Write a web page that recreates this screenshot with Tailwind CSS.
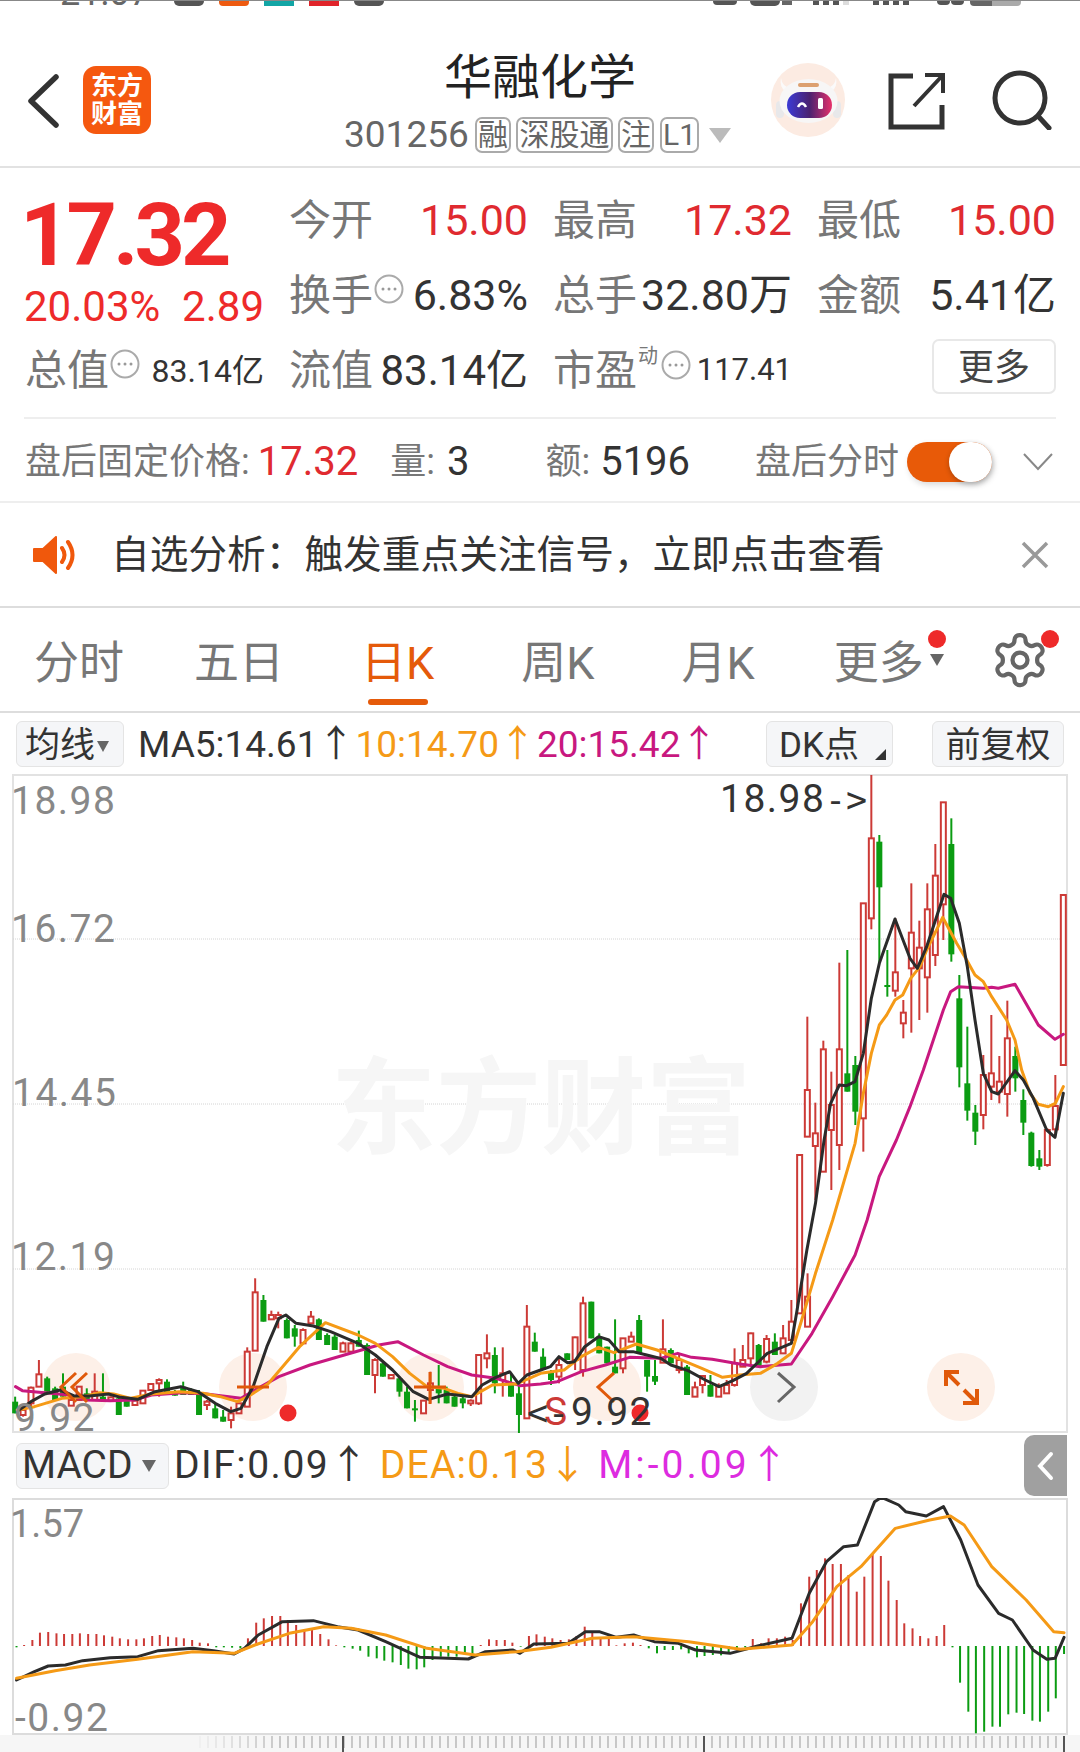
<!DOCTYPE html>
<html lang="zh-CN">
<head>
  <meta charset="UTF-8" />
  <meta name="viewport" content="width=device-width, initial-scale=1.0"/>
  <title>华融化学</title>
  <script src="https://cdn.jsdelivr.net/npm/@tailwindcss/browser@4"></script>
</head>
<body class="bg-white w-[1080px] h-[1752px] overflow-hidden font-[Roboto,'Noto_Sans_CJK_SC',sans-serif] text-[#333]">

  <!-- status bar, cut off at the top -->
  <div class="h-[6px] overflow-hidden border-t border-[#888] flex items-start">
    <span class="ml-[60px] w-[88px] mt-[-26px] text-[36px] leading-[36px] text-[#666]">21:07</span>
    <div class="ml-[26px] w-[30px] h-[5px] rounded-b-[10px] bg-[#555]"></div>
    <div class="ml-[15px] w-[30px] h-[5px] rounded-b bg-[#ee5a10]"></div>
    <div class="ml-[15px] w-[30px] h-[5px] bg-[#12a5a5]"></div>
    <div class="ml-[15px] w-[30px] h-[5px] bg-[#e0242a]"></div>
    <div class="ml-[15px] w-[30px] h-[5px] rounded-b-[10px] bg-[#555]"></div>
    <div class="ml-[329px] w-[24px] h-[4px] rounded-b-full bg-[#555]"></div>
    <div class="ml-[13px] w-[30px] h-[5px] rounded-b-[10px] bg-[#555]"></div>
    <div class="ml-[2px] w-[10px] h-[4px] bg-[#666]"></div>
    <div class="ml-[21px] w-[6px] h-[4px] bg-[#555]"></div>
    <div class="ml-[4px] w-[6px] h-[4px] bg-[#555]"></div>
    <div class="ml-[4px] w-[6px] h-[4px] bg-[#555]"></div>
    <div class="ml-[4px] w-[6px] h-[4px] bg-[#ddd]"></div>
    <div class="ml-[24px] w-[6px] h-[4px] bg-[#555]"></div>
    <div class="ml-[4px] w-[6px] h-[4px] bg-[#555]"></div>
    <div class="ml-[4px] w-[6px] h-[4px] bg-[#555]"></div>
    <div class="ml-[4px] w-[6px] h-[4px] bg-[#555]"></div>
    <div class="ml-[28px] w-[13px] h-[4px] rounded-b-full bg-[#555]"></div>
    <div class="ml-[1px] w-[13px] h-[4px] rounded-b-full bg-[#555]"></div>
    <div class="ml-[6px] w-[22px] h-[5px] rounded-bl bg-[#666]"></div>
    <div class="w-[29px] h-[5px] rounded-br bg-[#aaa]"></div>
  </div>

  <!-- header -->
  <header class="h-[162px] border-b-2 border-[#e2e2e2] flex items-start">
    <svg class="ml-[27px] mt-[68px]" width="32" height="54" viewBox="0 0 32 54" fill="none"><path d="M29 3 4 27l25 24" stroke="#333" stroke-width="5.5" stroke-linecap="round" stroke-linejoin="round"/></svg>
    <div class="ml-[24px] mt-[60px] w-[68px] h-[68px] rounded-[13px] bg-[#f5580f] flex flex-col items-center justify-center text-white text-[26px] font-bold leading-[28px]">
      <span>东方</span><span>财富</span>
    </div>
    <div class="ml-[193px] mt-[42px] w-[387px] flex flex-col items-center">
      <div class="h-[60px] pl-[5px] text-[48px] leading-[60px] text-[#222]">华融化学</div>
      <div class="mt-[9px] w-full flex items-center text-[#666]">
        <span class="text-[37px] leading-[36px] w-[124px]">301256</span>
        <span class="ml-[7px] w-[36px] h-[36px] border-2 border-[#aaa] rounded-[7px] text-[30px] leading-[32px] text-center">融</span>
        <span class="ml-[5px] w-[97px] h-[36px] border-2 border-[#aaa] rounded-[7px] text-[30px] leading-[32px] text-center">深股通</span>
        <span class="ml-[5px] w-[36px] h-[36px] border-2 border-[#aaa] rounded-[7px] text-[30px] leading-[32px] text-center">注</span>
        <span class="ml-[6px] w-[39px] h-[36px] border-2 border-[#aaa] rounded-[7px] text-[30px] leading-[32px] text-center">L1</span>
        <span class="ml-[10px] w-0 h-0 border-x-[11px] border-x-transparent border-t-[15px] border-t-[#bbb]"></span>
      </div>
    </div>
    <svg class="ml-[39px] mt-[57px]" width="76" height="74" viewBox="0 0 76 74">
      <defs><linearGradient id="visor" x1="0" x2="1"><stop offset="0" stop-color="#3b3bd6"/><stop offset="0.5" stop-color="#4a2270"/><stop offset="1" stop-color="#e6306a"/></linearGradient></defs>
      <circle cx="38" cy="37" r="37" fill="#fcebe2"/>
      <path d="M11 15q1 8 9 10l-4 4q-7-5-5-14zM66 15q-1 8-9 10l4 4q7-5 5-14z" fill="#fbfafa"/>
      <rect x="6" y="38" width="8" height="17" rx="4" fill="#e8e8ea"/>
      <rect x="63" y="38" width="8" height="17" rx="4" fill="#e8e8ea"/>
      <ellipse cx="38.500" cy="38" rx="29" ry="22" fill="#f7f6f6"/>
      <rect x="28" y="20" width="21" height="4" rx="2" fill="#dca070"/>
      <rect x="17" y="29" width="45" height="26" rx="13" fill="url(#visor)"/>
      <path d="M28 44q4-7 8 0" stroke="#fff" stroke-width="2.500" fill="none"/>
      <rect x="48" y="35" width="5" height="11" rx="1.500" fill="#fff"/>
    </svg>
    <svg class="ml-[42px] mt-[66px]" width="58" height="58" viewBox="0 0 58 58" fill="none" stroke="#333" stroke-width="5"><path d="M25 4H3v51h51V33"/><path d="M26 34 54 4M37 3h18v18" stroke-width="4"/></svg>
    <svg class="ml-[46px] mt-[64px]" width="60" height="60" viewBox="0 0 60 60" fill="none" stroke="#333" stroke-width="5" stroke-linecap="round"><circle cx="28" cy="28" r="25"/><path d="M46 46 57 58"/></svg>
  </header>

  <!-- quote -->
  <section class="h-[249px] pt-[15px] pl-[25px] grid grid-cols-[239px_239px_239px_239px] grid-rows-[75px_75px_75px] gap-x-[25px] text-[#777] text-[42px] whitespace-nowrap">
    <div class="row-span-2 flex flex-col text-[#ee2a2a]">
      <div class="mt-[2px] ml-[-5px] text-[88px] font-bold leading-[100px] tracking-[-4px]">17.32</div>
      <div class="ml-[-1px] w-[240px] flex justify-between text-[42px] leading-[44px]"><span>20.03%</span><span>2.89</span></div>
    </div>
    <div class="flex items-center justify-between"><span>今开</span><span class="text-[#e02a30] text-[43px]">15.00</span></div>
    <div class="flex items-center justify-between"><span>最高</span><span class="text-[#e02a30] text-[43px]">17.32</span></div>
    <div class="flex items-center justify-between"><span>最低</span><span class="text-[#e02a30] text-[43px]">15.00</span></div>

    <div class="flex items-center">
      <span>换手</span>
      <svg class="mb-[14px] ml-[1px]" width="30" height="30" viewBox="0 0 30 30" fill="#999"><circle cx="15" cy="15" r="13.500" fill="none" stroke="#aaa" stroke-width="2"/><circle cx="9" cy="15" r="1.500"/><circle cx="15" cy="15" r="1.500"/><circle cx="21" cy="15" r="1.500"/></svg>
      <span class="ml-auto text-[#333] text-[43px]">6.83%</span>
    </div>
    <div class="flex items-center justify-between"><span>总手</span><span class="text-[#333] text-[43px]">32.80万</span></div>
    <div class="flex items-center justify-between"><span>金额</span><span class="text-[#333] text-[43px]">5.41亿</span></div>

    <div class="flex items-center">
      <span>总值</span>
      <svg class="mb-[14px] ml-[1px]" width="30" height="30" viewBox="0 0 30 30" fill="#999"><circle cx="15" cy="15" r="13.500" fill="none" stroke="#aaa" stroke-width="2"/><circle cx="9" cy="15" r="1.500"/><circle cx="15" cy="15" r="1.500"/><circle cx="21" cy="15" r="1.500"/></svg>
      <span class="ml-auto text-[#333] text-[32px]">83.14亿</span>
    </div>
    <div class="flex items-center justify-between"><span>流值</span><span class="text-[#333] text-[42px]">83.14亿</span></div>
    <div class="flex items-center">
      <span class="shrink-0">市盈</span>
      <span class="mb-[30px] ml-[1px] shrink-0 text-[20px] leading-[22px]">动</span>
      <svg class="mb-[12px] ml-[3px] shrink-0" width="30" height="30" viewBox="0 0 30 30" fill="#999"><circle cx="15" cy="15" r="13.500" fill="none" stroke="#aaa" stroke-width="2"/><circle cx="9" cy="15" r="1.500"/><circle cx="15" cy="15" r="1.500"/><circle cx="21" cy="15" r="1.500"/></svg>
      <span class="ml-auto text-[#333] text-[31px]">117.41</span>
    </div>
    <div class="flex items-center justify-end">
      <span class="mb-[8px] w-[124px] h-[55px] border-2 border-[#e8e8e8] rounded-[7px] text-[36px] leading-[54px] text-center text-[#444]">更多</span>
    </div>
  </section>

  <!-- after hours row -->
  <div class="mx-[24px] h-[2px] bg-[#eeeeee]"></div>
  <div class="h-[84px] pt-[3px] border-b-2 border-[#eeeeee] flex items-center text-[36px] text-[#777]">
    <span class="ml-[25px]">盘后固定价格:</span>
    <span class="ml-[8px] text-[40px] text-[#e02a30]">17.32</span>
    <span class="ml-[32px]">量:</span>
    <span class="ml-[12px] text-[40px] text-[#333]">3</span>
    <span class="ml-[76px]">额:</span>
    <span class="ml-[10px] text-[40px] text-[#333]">5196</span>
    <span class="ml-[65px]">盘后分时</span>
    <div class="ml-[8px] w-[85px] h-[40px] rounded-full bg-[#e85a08] flex justify-end shadow-[2px_3px_6px_rgba(0,0,0,0.15)]">
      <div class="w-[43px] h-[40px] rounded-full bg-white shadow-[0_2px_5px_rgba(0,0,0,0.25)]"></div>
    </div>
    <svg class="ml-[31px]" width="30" height="18" viewBox="0 0 30 18" fill="none" stroke="#888" stroke-width="2"><path d="M1 1l14 15L29 1"/></svg>
  </div>

  <!-- notice -->
  <div class="h-[105px] border-b-2 border-[#dddddd] flex items-center">
    <svg class="ml-[33px]" width="45" height="38" viewBox="0 0 45 38"><path d="M1 13h9L23 1v36L10 25H1z" fill="#f0580c" stroke="#f0580c" stroke-linejoin="round" stroke-width="2"/><path d="M29 12q5 7 0 14M35 6q9 13 0 26" fill="none" stroke="#f0580c" stroke-width="4" stroke-linecap="round"/></svg>
    <span class="ml-[33px] mt-[2px] text-[38.700px] text-[#333] whitespace-nowrap">自选分析&#xFF1A;触发重点关注信号&#xFF0C;立即点击查看</span>
    <svg class="ml-auto mr-[31px]" width="28" height="28" viewBox="0 0 28 28" stroke="#999" stroke-width="3.500"><path d="M2 2l24 24M26 2 2 26"/></svg>
  </div>

  <!-- period tabs -->
  <nav class="relative h-[105px] border-b-2 border-[#dddddd] flex items-center pt-[8px] text-[45px] text-[#777]">
    <span class="ml-[34px]">分时</span>
    <span class="ml-[70px]">五日</span>
    <span class="ml-[77px] text-[#e55a0a]">日K</span>
    <span class="ml-[87px]">周K</span>
    <span class="ml-[87px]">月K</span>
    <span class="ml-[79px]">更多</span>
    <span class="absolute left-[928px] top-[22px] w-[18px] h-[18px] rounded-full bg-[#ee2a2a]"></span>
    <span class="absolute left-[930px] top-[46px] w-0 h-0 border-x-[7px] border-x-transparent border-t-[12px] border-t-[#666]"></span>
    <svg class="absolute left-[990px] top-[22px]" width="60" height="60" viewBox="0 0 24 24" fill="none" stroke="#666" stroke-width="1.700"><path d="M12.22 2h-.44a2 2 0 0 0-2 2v.18a2 2 0 0 1-1 1.73l-.43.25a2 2 0 0 1-2 0l-.15-.08a2 2 0 0 0-2.73.73l-.22.38a2 2 0 0 0 .73 2.73l.15.1a2 2 0 0 1 1 1.72v.51a2 2 0 0 1-1 1.74l-.15.09a2 2 0 0 0-.73 2.73l.22.38a2 2 0 0 0 2.73.73l.15-.08a2 2 0 0 1 2 0l.43.25a2 2 0 0 1 1 1.73V20a2 2 0 0 0 2 2h.44a2 2 0 0 0 2-2v-.18a2 2 0 0 1 1-1.73l.43-.25a2 2 0 0 1 2 0l.15.08a2 2 0 0 0 2.73-.73l.22-.39a2 2 0 0 0-.73-2.73l-.15-.08a2 2 0 0 1-1-1.74v-.5a2 2 0 0 1 1-1.74l.15-.09a2 2 0 0 0 .73-2.73l-.22-.38a2 2 0 0 0-2.73-.73l-.15.08a2 2 0 0 1-2 0l-.43-.25a2 2 0 0 1-1-1.73V4a2 2 0 0 0-2-2z"/><circle cx="12" cy="12" r="3"/></svg>
    <span class="absolute left-[1041px] top-[22px] w-[18px] h-[18px] rounded-full bg-[#ee2a2a]"></span>
    <span class="absolute left-[368px] top-[91px] w-[60px] h-[6px] rounded-full bg-[#e55a0a]"></span>
  </nav>

  <!-- MA legend -->
  <div class="relative h-[61px] flex items-center text-[37px] whitespace-nowrap">
    <div class="ml-[16px] w-[108px] h-[46px] bg-[#f5f6f8] border border-[#e4e4e4] rounded-[6px] flex items-center pl-[8px] pt-[6px] text-[35px]">均线<span class="ml-[2px] w-0 h-0 border-x-[6px] border-x-transparent border-t-[11px] border-t-[#666]"></span></div>
    <span class="ml-[14px] mt-[3px] text-[#333]">MA5:14.61↑</span>
    <span class="ml-[1px] mt-[3px] text-[#f59a16]">10:14.70↑</span>
    <span class="ml-[1px] mt-[3px] text-[#c8187f]">20:15.42↑</span>
    <div class="absolute left-[766px] top-[8px] w-[127px] h-[46px] bg-[#f5f6f8] border border-[#e4e4e4] rounded-[6px] pl-[12px] text-[35px] leading-[48px]">DK点<span class="absolute right-[6px] bottom-[6px] w-0 h-0 border-l-[11px] border-l-transparent border-b-[11px] border-b-[#333]"></span></div>
    <div class="absolute left-[932px] top-[8px] w-[132px] h-[46px] bg-[#f5f6f8] border border-[#e4e4e4] rounded-[6px] text-center text-[35px] leading-[48px]">前复权</div>
  </div>

  <!-- price chart -->
  <svg id="kline" class="block ml-[12px]" width="1056" height="659" viewBox="12 774 1056 659"></svg>

  <!-- MACD legend -->
  <div class="relative h-[65px] flex items-center text-[39px] whitespace-nowrap">
    <div class="ml-[16px] w-[153px] h-[46px] bg-[#f5f6f8] border border-[#e4e4e4] rounded-[6px] flex items-center pl-[5px]">MACD<span class="ml-[9px] w-0 h-0 border-x-[7px] border-x-transparent border-t-[12px] border-t-[#666]"></span></div>
    <span class="ml-[5px] tracking-[1.500px] text-[#333]">DIF:0.09↑</span>
    <span class="ml-[10px] tracking-[1.200px] text-[#f59a16]">DEA:0.13↓</span>
    <span class="ml-[10px] tracking-[3px] text-[#dd2be0]">M:-0.09↑</span>
    <div class="absolute left-[1024px] top-[2px] w-[43px] h-[61px] bg-[#a0a0a0] rounded-l-[10px] flex items-center justify-center">
      <svg width="17" height="30" viewBox="0 0 17 30" fill="none" stroke="#fff" stroke-width="4" stroke-linecap="round"><path d="M14 3 3 15l11 12"/></svg>
    </div>
  </div>

  <!-- MACD chart -->
  <svg id="macd" class="block ml-[12px]" width="1056" height="237" viewBox="12 1498 1056 237"></svg>

  <!-- time scroller -->
  <svg id="scroller" class="block bg-[#f6f6f6]" width="1080" height="17" viewBox="0 1735 1080 17"></svg>

  <script>
    // reference points were read off crops of the screenshot, so each block keeps its crop's scale
    const z3 = (x, y) => [700 + x / 3, 770 + y / 3];
    const z4 = (x, y) => [x / 2.904, 1240 + y / 3];
    const z5 = (x, y) => [540 + x / 2.904, 1140 + y / 3];
    const z6 = (x, y) => [x / 1.452, 1430 + y / 3];

    // x, high, body top, body bottom, low, colour
    const left = [[44,470,485,520,520,'g'],[67,505,510,525,530,'r'],[90,440,443,490,500,'r'],[113,360,403,440,440,'r'],[137,410,415,455,460,'g'],[160,440,445,480,480,'g'],[183,400,440,470,470,'g'],[207,475,480,497,497,'r'],[230,440,440,480,480,'r'],[252,445,460,480,480,'g'],[275,400,455,480,480,'r'],[299,400,470,480,480,'g'],[322,470,472,482,482,'r'],[345,470,475,525,525,'g'],[368,475,478,500,500,'g'],[392,480,482,495,495,'r'],[415,450,452,490,490,'r'],[438,430,432,450,450,'r'],[462,415,420,430,470,'r'],[485,418,425,465,465,'g'],[508,450,455,467,467,'g'],[532,425,440,465,465,'g'],[555,445,450,465,465,'g'],[578,450,460,525,525,'g'],[601,480,485,495,510,'r'],[625,490,505,535,535,'g'],[648,510,530,545,545,'g'],[671,500,520,540,565,'r'],[694,490,490,520,520,'r'],[718,322,335,500,500,'r'],[741,115,157,332,332,'r'],[765,165,180,245,245,'g'],[788,212,225,238,238,'r'],[808,215,225,235,265,'r'],[833,235,240,295,295,'g'],[856,255,265,290,320,'g'],[880,265,270,310,310,'r'],[903,213,230,250,250,'r'],[926,235,238,300,300,'g'],[950,280,285,315,315,'g'],[972,285,290,330,330,'g'],[996,305,310,335,335,'r'],[1019,305,310,335,335,'r'],[1042,272,300,320,320,'g'],[1066,310,315,405,405,'g'],[1089,355,360,405,460,'r'],[1112,365,370,410,410,'g'],[1136,405,405,415,415,'r'],[1160,410,415,455,470,'g'],[1182,440,455,505,505,'g'],[1205,480,505,510,545,'g'],[1230,480,482,520,520,'r'],[1250,395,430,450,490,'r'],[1274,375,440,460,490,'g'],[1297,440,450,490,490,'g'],[1320,465,470,500,500,'g'],[1344,470,475,490,505,'g'],[1367,478,482,490,498,'r'],[1390,345,345,490,495,'r'],[1414,283,340,355,385,'r'],[1437,322,345,430,460,'g'],[1460,322,400,420,470,'r'],[1484,400,430,470,470,'g'],[1507,430,460,525,580,'g'],[1530,195,260,535,535,'r'],[1553,278,305,335,335,'g']];
    const mid = [[9,625,650,690,690,'g'],[32,690,695,720,735,'g'],[55,650,675,710,730,'r'],[79,640,640,660,660,'g'],[102,590,592,660,690,'r'],[125,470,490,690,710,'r'],[149,485,485,595,595,'g'],[172,580,590,640,640,'g'],[195,620,620,670,670,'g'],[218,538,680,700,700,'g'],[241,595,595,685,700,'r'],[265,575,590,605,605,'r'],[288,525,540,640,640,'g'],[311,660,660,710,755,'g'],[334,660,708,725,735,'g'],[357,538,628,668,668,'r'],[380,625,630,670,670,'g'],[404,640,660,690,700,'r'],[427,675,680,765,765,'g'],[450,725,742,770,770,'r'],[472,705,708,735,760,'r'],[495,705,735,770,770,'g'],[519,730,740,770,770,'r'],[542,720,735,760,760,'r'],[565,625,670,735,740,'r'],[589,615,660,680,680,'r'],[612,578,580,655,680,'r'],[635,612,615,680,680,'g'],[658,585,597,665,670,'r'],[682,580,605,645,645,'g'],[706,555,595,640,640,'r'],[730,480,545,600,600,'r'],[754,45,45,520,520,'r'],[777,400,470,560,560,'r']];
    const right = [[322,740,960,1100,1100,'r'],[346,998,1090,1128,1290,'r'],[370,812,838,1205,1205,'r'],[394,905,1005,1080,1260,'r'],[418,578,838,1125,1200,'r'],[442,540,910,965,965,'g'],[466,858,885,1025,1065,'g'],[490,400,400,1045,1145,'r'],[514,15,205,445,478,'r'],[538,195,215,352,578,'g'],[562,540,645,650,680,'g'],[586,445,607,662,680,'r'],[610,690,728,760,805,'r'],[634,340,488,595,788,'r'],[658,452,533,595,750,'r'],[682,340,418,622,728,'r'],[706,222,317,555,588,'r'],[730,97,97,403,510,'r'],[754,145,222,553,575,'g'],[778,615,685,892,952,'g'],[802,770,940,1022,1052,'g'],[826,1005,1028,1085,1125,'g'],[850,855,915,1035,1078,'r'],[874,735,910,950,990,'r'],[898,858,935,965,1000,'r'],[922,692,805,972,1040,'r'],[946,830,858,925,965,'g'],[970,958,990,1058,1095,'g'],[994,1085,1088,1188,1190,'g'],[1018,1140,1165,1190,1200,'g'],[1042,1075,1080,1185,1190,'r'],[1066,915,1008,1078,1100,'r'],[1090,375,375,885,885,'r']];

    const ma5 = [].concat(
      [[55,510],[90,485],[130,462],[175,450],[215,468],[260,468],[315,462],[350,472],[400,478],[450,455],[525,440],[575,455],[625,490],[670,515],[700,505],[735,440],[775,320],[810,235],[830,225],[860,250],[910,258],[960,275],[1040,310],[1090,345],[1140,390],[1200,455],[1245,478],[1300,462],[1370,470],[1400,435],[1440,412],[1480,395],[1505,430],[1530,405],[1570,390]].map(p => z4(...p)),
      [[30,680],[55,650],[80,668],[100,665],[130,620],[170,590],[200,600],[230,635],[270,635],[310,645],[350,655],[380,675],[430,692],[480,720],[520,740],[560,722],[600,700],[660,640],[730,610],[745,520],[775,330],[800,190],[825,0]].map(p => z5(...p)),
      [[392,1000],[418,945],[440,947],[465,935],[490,850],[514,685],[538,580],[585,447],[630,565],[652,595],[680,530],[732,373],[752,385],[778,460],[802,590],[825,750],[850,910],[875,965],[895,972],[945,902],[970,930],[1000,985],[1040,1080],[1065,1102],[1090,970]].map(p => z3(...p)));
    const ma10 = [].concat(
      [[50,510],[100,500],[180,475],[240,470],[290,458],[330,462],[380,475],[440,462],[520,455],[590,460],[640,470],[690,485],[720,470],[780,430],[870,320],[945,248],[1040,285],[1090,310],[1140,350],[1190,400],[1240,440],[1290,445],[1330,460],[1370,470],[1430,435],[1500,432],[1570,400]].map(p => z4(...p)),
      [[70,690],[120,650],[170,622],[215,638],[280,612],[340,630],[400,655],[470,685],[530,712],[580,705],[640,700],[690,670],[730,640],[760,540],[800,400],[850,240],[915,10]].map(p => z5(...p)),
      [[490,970],[514,850],[538,765],[560,735],[585,690],[608,675],[632,625],[660,590],[680,540],[728,442],[770,520],[800,570],[825,615],[850,635],[875,680],[920,750],[945,810],[965,900],[990,970],[1015,1003],[1045,1010],[1066,1000],[1090,950]].map(p => z3(...p)));
    const ma20 = [].concat(
      [[45,440],[65,452],[130,458],[200,465],[250,480],[320,482],[390,480],[440,465],[530,458],[600,462],[700,475],[740,450],[810,410],[900,375],[1000,345],[1100,315],[1155,305],[1230,345],[1300,380],[1370,405],[1440,415],[1510,437],[1570,432]].map(p => z4(...p)),
      [[50,725],[120,695],[190,675],[260,652],[350,655],[400,640],[440,652],[500,658],[580,672],[640,680],[730,672],[790,580],[850,470],[915,345],[950,240],[985,110],[1035,0]].map(p => z5(...p)),
      [[630,1010],[670,900],[700,810],[730,720],[752,665],[775,650],[850,655],[875,652],[895,655],[945,643],[975,695],[1015,765],[1065,808],[1090,793]].map(p => z3(...p)));

    const line = (pts, color, w) => `<polyline points="${pts.map(p => p.join(',')).join(' ')}" fill="none" stroke="${color}" stroke-width="${w}" stroke-linejoin="round" stroke-linecap="round"/>`;

    function candle(map, [x, hi, top, bot, lo, c]) {
      const [px, yHi] = map(x, hi), yTop = map(x, top)[1], yBot = map(x, bot)[1], yLo = map(x, lo)[1];
      if (c === 'g') {
        return `<path d="M${px} ${yHi}V${yLo}" stroke="#0b9c12" stroke-width="2"/><rect x="${px - 3}" y="${yTop}" width="6" height="${Math.max(yBot - yTop, 2)}" fill="#0b9c12"/>`;
      }
      return `<path d="M${px} ${yHi}V${yLo}" stroke="#cc3a36" stroke-width="2"/><rect x="${px - 2.5}" y="${yTop}" width="5" height="${Math.max(yBot - yTop, 2)}" fill="#fff" stroke="#cc3a36" stroke-width="2"/>`;
    }

    function label(x, y, text, color, size = 39, spacing = 1.5) {
      return `<text x="${x}" y="${y}" fill="${color}" font-size="${size}" letter-spacing="${spacing}">${text}</text>`;
    }

    let k = '<rect x="13" y="775" width="1054" height="657" fill="none" stroke="#e2e2e2" stroke-width="2"/>';
    for (const y of [939, 1104, 1269]) k += `<path d="M13 ${y}H1067" stroke="#d4d4d4" stroke-dasharray="1 1"/>`;
    k += `<text x="331" y="1145" fill="#f6f6f6" font-size="105" font-weight="700">东方财富</text>`;
    for (const cx of [76, 253, 430, 607, 961]) k += `<circle cx="${cx}" cy="1387" r="34" fill="#fdf0e8"/>`;
    k += `<circle cx="784" cy="1387" r="34" fill="#f2f2f2"/>`;
    k += left.map(c => candle(z4, c)).join('') + mid.map(c => candle(z5, c)).join('') + right.map(c => candle(z3, c)).join('');
    k += line(ma20, '#c8187f', 3) + line(ma10, '#f59a16', 3) + line(ma5, '#2b2b2b', 3);
    // round overlay buttons
    k += `<g fill="none" stroke="#e0590a" stroke-width="3">
      <path d="M76 1373 61 1387l15 15M87 1373 72 1387l15 15"/>
      <path d="M237 1387h32"/>
      <path d="M414 1387h32M430 1372v32"/>
      <path d="M614 1373 598 1387l16 15"/>
      <path d="M959 1372h-13v14M946 1372l13 13M963 1403h14v-14M977 1403l-13-13" stroke-width="4"/>
    </g>`;
    k += `<path d="M778 1373l16 14-16 15" fill="none" stroke="#666" stroke-width="3"/>`;
    k += `<circle cx="288" cy="1413" r="8.5" fill="#ee2a2a"/><circle cx="640" cy="1413" r="8.5" fill="#ee2a2a"/>`;
    // axis labels
    k += label(11, 814, '18.98', '#888') + label(11, 942, '16.72', '#888') + label(12, 1106, '14.45', '#888') + label(11, 1270, '12.19', '#888') + label(14, 1431, '9.92', '#888');
    k += label(720, 812, '18.98', '#333') + `<text x="825" y="812" fill="#333" font-size="35" font-family="DejaVu Sans Mono">-&gt;</text>`;
    k += label(544, 1425, 'S', '#cc3a36') + `<text x="527" y="1425" fill="#333" font-size="35" font-family="DejaVu Sans Mono">&lt;-</text>` + label(571, 1425, '9.92', '#333');
    document.getElementById('kline').innerHTML = k;

    const bars = [[24,652],[35,645],[47,630],[58,608],[70,606],[82,610],[93,612],[105,612],[116,610],[128,612],[140,612],[151,616],[163,620],[174,625],[186,628],[198,628],[209,625],[221,618],[232,615],[244,620],[256,622],[267,625],[279,630],[290,638],[302,640],[314,652],[325,652],[337,653],[349,655],[360,625],[372,578],[383,565],[395,558],[407,558],[418,570],[430,585],[442,598],[453,600],[465,612],[477,628],[488,646],[500,652],[512,656],[523,662],[535,680],[547,685],[558,692],[570,697],[582,705],[593,716],[605,718],[616,712],[628,690],[640,680],[651,680],[663,680],[675,675],[686,672],[698,645],[710,628],[721,630],[733,630],[744,638],[756,650],[768,618],[779,613],[791,620],[802,625],[814,630],[826,628],[837,618],[849,590],[860,605],[872,625],[884,625],[895,646],[907,640],[919,638],[930,645],[942,655],[954,670],[965,660],[977,660],[989,658],[1000,670],[1012,682],[1023,678],[1035,675],[1047,676],[1058,670],[1070,660],[1082,652],[1093,627],[1105,640],[1116,625],[1128,625],[1140,620],[1151,630],[1163,520],[1175,440],[1186,420],[1198,385],[1209,402],[1221,402],[1232,435],[1244,485],[1255,440],[1267,370],[1279,378],[1290,452],[1302,510],[1313,580],[1325,595],[1336,618],[1348,625],[1360,618],[1371,585],[1383,652],[1394,758],[1406,845],[1417,910],[1429,905],[1441,890],[1452,890],[1464,853],[1476,848],[1487,852],[1499,872],[1510,875],[1522,845],[1533,805],[1545,672]];
    const dif = [[24,750],[50,725],[70,708],[95,705],[120,692],[160,683],[200,680],[230,662],[280,655],[310,662],[340,672],[355,655],[375,615],[410,575],[455,572],[490,590],[520,600],[560,635],[610,682],[680,687],[705,665],[745,660],[755,670],[775,642],[825,640],[850,605],[870,605],[895,622],[920,615],[950,635],[985,640],[1010,660],[1060,670],[1100,648],[1150,625],[1175,490],[1200,395],[1225,350],[1245,345],[1270,215],[1280,202],[1305,225],[1315,245],[1345,258],[1370,230],[1395,330],[1420,465],[1450,550],[1470,570],[1500,660],[1520,688],[1532,685],[1545,622]];
    const dea = [[24,745],[80,722],[130,705],[200,688],[280,665],[340,670],[370,645],[420,610],[470,590],[510,595],[560,615],[620,655],[690,675],[750,665],[800,652],[860,625],[920,620],[1000,635],[1075,658],[1150,645],[1180,575],[1215,470],[1250,410],[1300,295],[1350,270],[1380,258],[1400,285],[1440,410],[1490,510],[1530,605],[1545,608]];

    let m = '<rect x="13" y="1499" width="1054" height="235" fill="none" stroke="#dcdcdc" stroke-width="2"/>';
    for (const [x, top] of bars) {
      const [px, py] = z6(x, top);
      m += `<path d="M${px} 1646V${py}" stroke="${top < 648 ? '#cc3a36' : '#0b9c12'}" stroke-width="2"/>`;
    }
    m += line(dif.map(p => z6(...p)), '#2b2b2b', 3) + line(dea.map(p => z6(...p)), '#f59a16', 3);
    m += label(10, 1537, '1.57', '#888', 38, 0) + label(15, 1731, '-0.92', '#888');
    document.getElementById('macd').innerHTML = m;

    let s = '';
    for (let x = 200; x < 1068; x += 8) {
      s += `<path d="M${x} 1736V1748" stroke="#999" stroke-opacity="${Math.min(1, (x - 190) / 90)}" stroke-width="1"/>`;
    }
    for (const x of [343, 704, 1064]) s += `<path d="M${x} 1736V1752" stroke="#555" stroke-width="2"/>`;
    document.getElementById('scroller').innerHTML = s;
  </script>
</body>
</html>
